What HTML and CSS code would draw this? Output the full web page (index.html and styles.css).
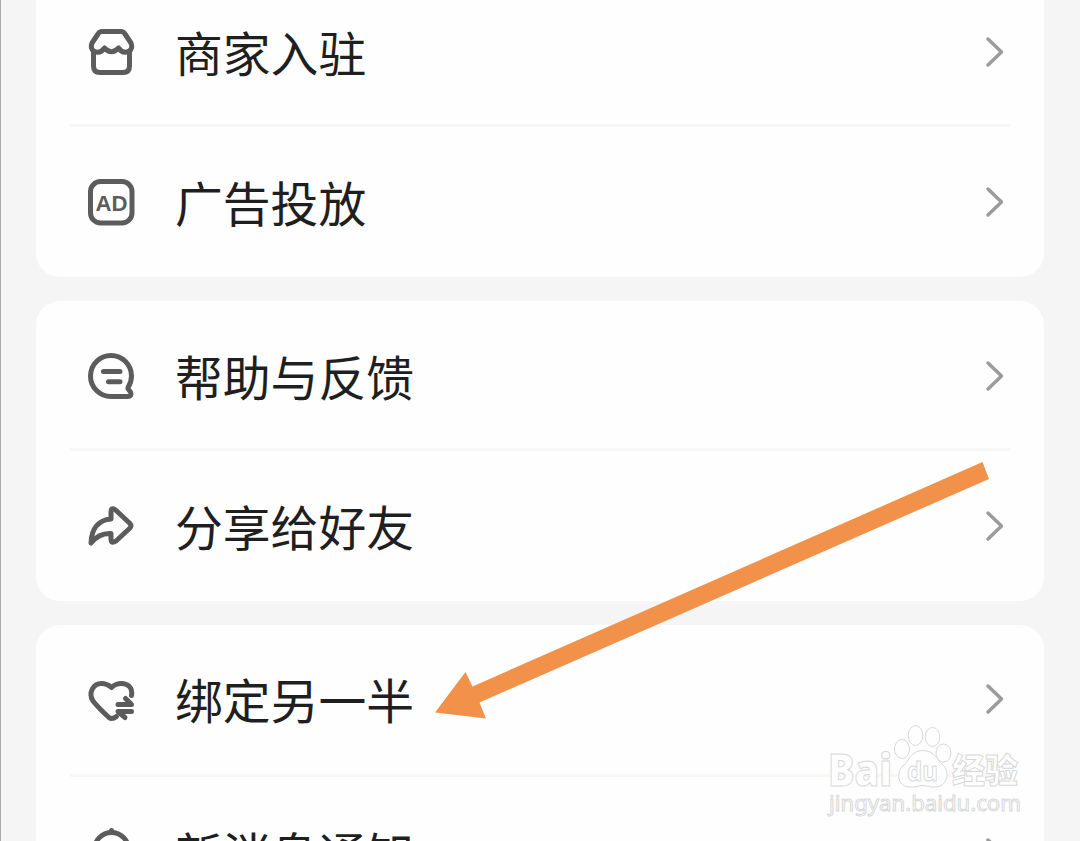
FILE: index.html
```html
<!DOCTYPE html>
<html lang="zh-CN">
<head>
  <meta charset="UTF-8">
  <meta name="viewport" content="width=device-width, initial-scale=1.0">
  <title>设置</title>
  <link rel="stylesheet" href="styles.css">
</head>
<body>
  <main class="page">
    <section class="card card-first">
      <div class="row">
        <svg class="icon" viewBox="0 0 48 48">
          <path d="M6.5 23V38Q6.5 44.5 13 44.5H36Q42.5 44.5 42.5 38V23"/>
          <path d="M15 3.5H34Q36.5 3.5 38 6L44 15Q46 20 42.5 23Q36 26.5 31.5 20Q24.5 27.5 17.5 20Q13 26.5 6.5 23Q3 20 5 15L11 6Q12.5 3.5 15 3.5Z"/>
        </svg>
        <span class="label">商家入驻</span>
        <svg class="chevron" viewBox="0 0 20 32"><path d="M3 3L16.5 16L3 29"/></svg>
      </div>
      <div class="row">
        <svg class="icon" viewBox="0 0 48 48">
          <rect x="3.5" y="3.5" width="41.5" height="41.5" rx="10"/>
          <text class="ad" x="24.5" y="32.5" text-anchor="middle" textLength="32" lengthAdjust="spacingAndGlyphs">AD</text>
        </svg>
        <span class="label">广告投放</span>
        <svg class="chevron" viewBox="0 0 20 32"><path d="M3 3L16.5 16L3 29"/></svg>
      </div>
    </section>

    <section class="card">
      <div class="row">
        <svg class="icon" viewBox="0 0 48 48">
          <path d="M24 44.5A20.5 20.5 0 1 1 44.5 24Q44.5 30 41 35.5Q40.5 36.5 41.5 37.5L43.5 40Q45.5 44.5 40.5 44.5Z"/>
          <path d="M16.5 19.5H33M21.5 29.7H33"/>
        </svg>
        <span class="label">帮助与反馈</span>
        <svg class="chevron" viewBox="0 0 20 32"><path d="M3 3L16.5 16L3 29"/></svg>
      </div>
      <div class="row">
        <svg class="icon" viewBox="0 0 48 48">
          <path d="M4 41C4.5 27 11 18 24 17V10Q24 5 28 7.5L42.5 21Q45.5 24 42.5 26.5L29 39Q24 42.5 24 37V31.5C15 31 9.5 34 4 41Z"/>
        </svg>
        <span class="label">分享给好友</span>
        <svg class="chevron" viewBox="0 0 20 32"><path d="M3 3L16.5 16L3 29"/></svg>
      </div>
    </section>

    <section class="card card-last">
      <div class="row">
        <svg class="icon" viewBox="0 0 48 48">
          <path d="M44.5 20.5C46 12 40 8.5 34.5 8.5Q28.5 8.5 24.5 12.5Q20 8.5 14.5 8.5C6 8.5 1 18 6 26Q12 33.5 22 42.5Q25 45 29.5 41.5"/>
          <path d="M31 29.5H44.5L38.5 23.5M44.5 36.5H31L38 42.5"/>
        </svg>
        <span class="label">绑定另一半</span>
        <svg class="chevron" viewBox="0 0 20 32"><path d="M3 3L16.5 16L3 29"/></svg>
      </div>
      <div class="row">
        <svg class="icon" viewBox="0 0 48 48">
          <path d="M24.5 1.5V3.5M7.500 37V20.5A17 17 0 0 1 41.5 20.5V37H7.5"/>
        </svg>
        <span class="label">新消息通知</span>
        <svg class="chevron" viewBox="0 0 20 32"><path d="M3 3L16.5 16L3 29"/></svg>
      </div>
    </section>
  </main>

  <svg class="arrow" viewBox="0 0 555 258">
    <path d="M0 250.5L30.5 210L37.5 224.5L547.5 0L554 17L44.5 240.5L51 256.5Z"/>
  </svg>

  <svg class="watermark" viewBox="0 0 200 100">
    <text class="wm-name" x="2" y="65.500" textLength="64" lengthAdjust="spacingAndGlyphs">Bai</text>
    <ellipse cx="76" cy="29" rx="7.5" ry="9.5"/>
    <ellipse cx="89.5" cy="15.5" rx="7.3" ry="10"/>
    <ellipse cx="106.5" cy="17" rx="7.3" ry="9.5"/>
    <ellipse cx="117.5" cy="33" rx="7.5" ry="9"/>
    <path d="M97 30.5C109 30.5 112 41 117 45C124 51 122 66 110 67C105 68 102 65.5 97 65.5C91 65.5 89 68 83 67C71 66 70 52 77 46C83 41 85 30.5 97 30.5Z"/>
    <text class="wm-du" x="81" y="61" textLength="31" lengthAdjust="spacingAndGlyphs">du</text>
    <text class="wm-cn" x="126" y="63" textLength="66" lengthAdjust="spacingAndGlyphs">经验</text>
    <text class="wm-url" x="3" y="91" textLength="192" lengthAdjust="spacingAndGlyphs">jingyan.baidu.com</text>
  </svg>
</body>
</html>
```

FILE: styles.css
```css
body {
  margin: 0;
  height: 841px;
  overflow: hidden;
  position: relative;
  background: #f5f5f5;
  font-family: "Noto Sans CJK SC", "Noto Sans", sans-serif;
}
.page {
  box-sizing: border-box;
  height: 841px;
  overflow: hidden;
  padding: 0 36px 0 35px;
  border-left: 1px solid #aaa;
}
.card {
  margin-bottom: 24px;
  background: #fefefe;
  border-radius: 24px;
}
.card-first {
  margin-top: -23px;
}
.row {
  display: flex;
  align-items: center;
  box-sizing: border-box;
  height: 150px;
  padding: 0 39px 0 51px;
}
.row:first-child {
  background: linear-gradient(#f7f7f7, #f7f7f7) 34px 147px / 940px 3px no-repeat;
}
.card-last .row:first-child {
  height: 153px;
  padding-bottom: 5px;
  background-position: 34px 149px;
}
.icon {
  width: 48px;
  height: 48px;
  margin-right: 40px;
  flex: none;
  overflow: visible;
  fill: none;
  stroke: #5c5c5c;
  stroke-width: 5;
  stroke-linecap: round;
  stroke-linejoin: round;
}
.ad {
  font: bold 22px "Liberation Sans", sans-serif;
  fill: #5c5c5c;
  stroke: none;
}
.label {
  flex: 1;
  font-size: 47.8px;
  line-height: 70px;
  color: #1f1f1f;
}
.chevron {
  width: 20px;
  height: 32px;
  fill: none;
  stroke: #9b9b9b;
  stroke-width: 3.5;
  stroke-linecap: round;
  stroke-linejoin: round;
}

/* overlays */
.arrow {
  position: absolute;
  left: 435px;
  top: 462px;
  width: 555px;
  height: 258px;
  fill: #f2924a;
}
.watermark {
  position: absolute;
  left: 826px;
  top: 720px;
  width: 200px;
  height: 100px;
  fill: #fefefe;
  stroke: #d8d8d8;
  stroke-width: 1;
}
.wm-name {
  font: 800 44px "Open Sans", sans-serif;
}
.wm-du {
  font: bold 27px "Open Sans", sans-serif;
}
.wm-cn {
  font: 900 34px "Noto Sans CJK SC", sans-serif;
}
.wm-url {
  font: 22px "Noto Sans", sans-serif;
}
```
